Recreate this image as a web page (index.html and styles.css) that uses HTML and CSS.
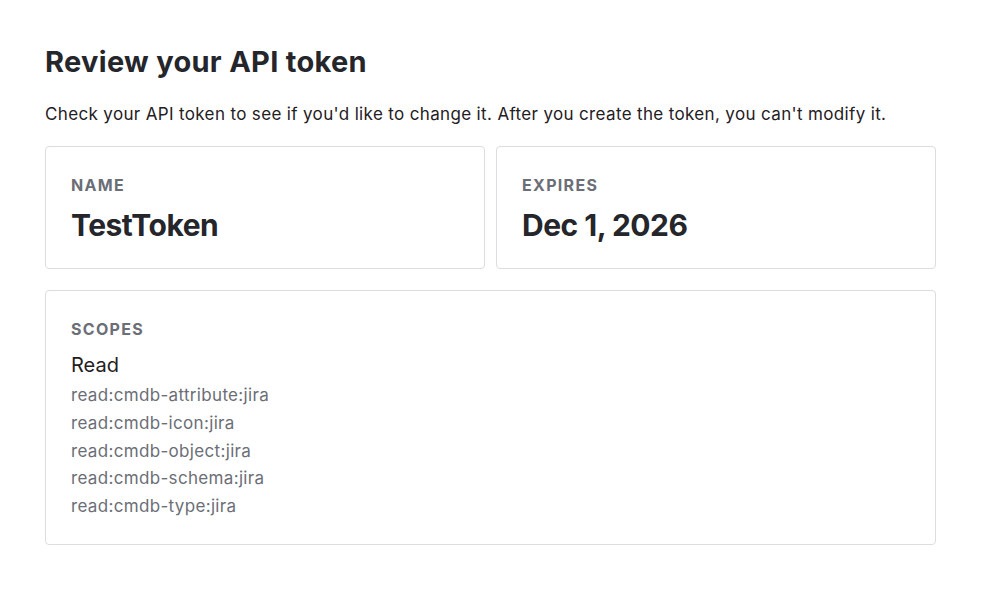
FILE: index.html
```html
<!DOCTYPE html>
<html lang="en">
<head>
<meta charset="utf-8">
<title>Review your API token</title>
<link rel="stylesheet" href="styles.css">
</head>
<body>
<main class="page">
  <h1 class="title">Review your API token</h1>
  <p class="intro">Check your API token to see if you'd like to change it. After you create the token, you can't modify it.</p>
  <div class="summary">
    <section class="card">
      <div class="label">Name</div>
      <div class="value">TestToken</div>
    </section>
    <section class="card">
      <div class="label">Expires</div>
      <div class="value">Dec 1, 2026</div>
    </section>
  </div>
  <section class="card scopes">
    <div class="label">Scopes</div>
    <div class="group">Read</div>
    <ul class="scope-list">
      <li>read:cmdb-attribute:jira</li>
      <li>read:cmdb-icon:jira</li>
      <li>read:cmdb-object:jira</li>
      <li>read:cmdb-schema:jira</li>
      <li>read:cmdb-type:jira</li>
    </ul>
  </section>
</main>
</body>
</html>
```

FILE: styles.css
```css
html, body {
  margin: 0;
  padding: 0;
  background: #ffffff;
}
body {
  font-family: Inter, "Noto Sans", "Liberation Sans", sans-serif;
  color: #1f2024;
}
.page {
  width: 891px;
  padding: 44px 0 0 45px;
}
.title {
  margin: 0;
  font-size: 29px;
  font-weight: 700;
  line-height: 36px;
  letter-spacing: 0.3px;
  color: #25262b;
}
.intro {
  margin: 21px 0 0;
  font-size: 17px;
  line-height: 26px;
  letter-spacing: 0.35px;
  color: #1f2024;
}
.summary {
  display: grid;
  grid-template-columns: 1fr 1fr;
  gap: 11px;
  margin-top: 19px;
}
.card {
  border: 1px solid #dcdde0;
  border-radius: 4px;
  padding: 27px 25px 26px;
  box-sizing: border-box;
}
.summary .card {
  height: 123px;
}
.label {
  font-size: 16px;
  font-weight: 700;
  line-height: 22px;
  letter-spacing: 1.3px;
  text-transform: uppercase;
  color: #6b6e76;
}
.value {
  margin-top: 12px;
  font-size: 30px;
  font-weight: 700;
  line-height: 34px;
  letter-spacing: -0.5px;
  color: #25262b;
}
.scopes {
  margin-top: 21px;
  height: 255px;
}
.group {
  margin-top: 12px;
  font-size: 20px;
  line-height: 26px;
  color: #1f2024;
}
.scope-list {
  list-style: none;
  margin: 4px 0 0;
  padding: 0;
}
.scope-list li {
  font-size: 17px;
  line-height: 27.75px;
  letter-spacing: 0.33px;
  color: #6b6e76;
}
```
